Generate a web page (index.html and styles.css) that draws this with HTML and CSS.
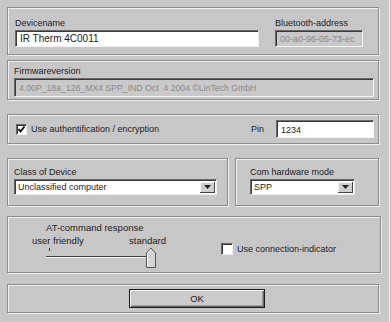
FILE: index.html
```html
<!DOCTYPE html>
<html lang="en">
  <head>
    <meta charset="UTF-8" />
    <title>Device settings</title>
    <link rel="stylesheet" href="styles.css">
  </head>
  <body>
    <div class="dialog">
      <div class="panel panel-name">
        <div class="field grow">
          <label>Devicename</label>
          <div class="edit">IR Therm 4C0011</div>
        </div>
        <div class="field bt">
          <label>Bluetooth-address</label>
          <div class="edit disabled">00-a0-96-05-73-ec</div>
        </div>
      </div>

      <div class="panel panel-fw">
        <div class="field grow">
          <label>Firmwareversion</label>
          <div class="edit disabled fw">4.00P_18a_128_MX4 SPP_IND Oct&nbsp; 4 2004 ©LinTech GmbH</div>
        </div>
      </div>

      <div class="panel panel-auth">
        <div class="check">
          <span class="box">
            <svg width="9" height="9" viewBox="0 0 9 9"><polyline points="1.5,4 3.5,6.5 7.5,1.5" fill="none" stroke="#111" stroke-width="2"/></svg>
          </span>
          <span>Use authentification / encryption</span>
        </div>
        <div class="pin">
          <span>Pin</span>
          <div class="edit pin-edit">1234</div>
        </div>
      </div>

      <div class="row">
        <div class="panel panel-class">
          <div class="field grow">
            <label>Class of Device</label>
            <div class="combo">
              <span class="combo-text">Unclassified computer</span>
              <span class="drop"><svg width="7" height="4" viewBox="0 0 7 4"><polygon points="0,0 7,0 3.5,4" fill="#222"/></svg></span>
            </div>
          </div>
        </div>
        <div class="panel panel-com">
          <div class="field grow">
            <label>Com hardware mode</label>
            <div class="combo">
              <span class="combo-text">SPP</span>
              <span class="drop"><svg width="7" height="4" viewBox="0 0 7 4"><polygon points="0,0 7,0 3.5,4" fill="#222"/></svg></span>
            </div>
          </div>
        </div>
      </div>

      <div class="panel panel-at">
        <div class="slider-group">
          <div class="at-title">AT-command response</div>
          <div class="slider-labels">
            <span>user friendly</span>
            <span>standard</span>
          </div>
          <div class="slider">
            <span class="tick"></span>
            <span class="track"></span>
            <svg class="thumb" width="10" height="21" viewBox="0 0 10 21">
              <polygon points="0.5,20.5 0.5,6 5,1 9.5,6 9.5,20.5" fill="#d4d4d4" stroke="#555"/>
              <polyline points="1.5,19.5 1.5,6.5 5,2.5" fill="none" stroke="#fff"/>
            </svg>
          </div>
        </div>
        <div class="check conn">
          <span class="box"></span>
          <span>Use connection-indicator</span>
        </div>
      </div>

      <div class="panel panel-ok">
        <button class="ok">OK</button>
      </div>
    </div>
  </body>
</html>
```

FILE: styles.css
```css
body {
  margin: 0;
  background: #c7c7c7;
  font-family: "Liberation Sans", Arial, sans-serif;
  font-size: 9px;
  color: #1c1c1c;
  width: 391px;
  height: 322px;
  overflow: hidden;
}

.dialog {
  display: flex;
  flex-direction: column;
  padding: 7px 10px 0 7px;
  border-right: 1px solid #e8e8e8;
  height: 322px;
  box-sizing: border-box;
  width: 390px;
}

.panel {
  border: 1px solid #8c8c8c;
  box-shadow: 1px 1px 0 #efefef, inset 1px 1px 0 #efefef;
  box-sizing: border-box;
  display: flex;
}

.field {
  display: flex;
  flex-direction: column;
}

.field label {
  line-height: 11px;
  margin-bottom: 1px;
}

.grow {
  flex: 1;
}

.edit {
  background: #fff;
  border-top: 1px solid #6a6a6a;
  border-left: 1px solid #6a6a6a;
  border-right: 1px solid #f2f2f2;
  border-bottom: 1px solid #f2f2f2;
  box-shadow: inset 1px 1px 0 #3a3a3a;
  height: 16px;
  line-height: 16px;
  padding-left: 4px;
  box-sizing: border-box;
  font-size: 10px;
}

.edit.disabled {
  background: #c9c9c9;
  color: #8a8a8a;
}

/* Devicename */
.panel-name {
  height: 48px;
  padding: 10px 15px 0 7px;
  gap: 16px;
}

.panel-name .edit {
  height: 17px;
}

.bt {
  width: 88px;
}

.bt .edit {
  font-size: 9px;
}

/* Firmware */
.panel-fw {
  margin-top: 5px;
  height: 40px;
  padding: 5px 4px 0 6px;
}

.panel-fw .edit {
  height: 19px;
  line-height: 19px;
}

.fw {
  font-size: 8.7px;
}

/* auth */
.panel-auth {
  margin-top: 14px;
  height: 30px;
  padding: 0 4px 0 8px;
  align-items: center;
  justify-content: space-between;
}

.check {
  display: flex;
  align-items: center;
  gap: 4px;
  font-size: 9px;
}

.box {
  width: 9px;
  height: 9px;
  background: #fff;
  border-top: 1px solid #6a6a6a;
  border-left: 1px solid #6a6a6a;
  border-right: 1px solid #efefef;
  border-bottom: 1px solid #efefef;
  box-shadow: inset 1px 1px 0 #333;
  display: flex;
}

.pin {
  display: flex;
  align-items: center;
  gap: 12px;
}

.pin-edit {
  width: 98px;
  height: 18px;
  line-height: 18px;
  font-size: 9px;
}

/* class / com */
.row {
  display: flex;
  margin-top: 14px;
  gap: 7px;
}

.panel-class {
  width: 221px;
  height: 48px;
  padding: 8px 10px 0 6px;
}

.panel-com {
  flex: 1;
  height: 48px;
  padding: 8px 23px 0 14px;
}

.combo {
  display: flex;
  align-items: center;
  background: #fff;
  border-top: 1px solid #6a6a6a;
  border-left: 1px solid #6a6a6a;
  border-right: 1px solid #efefef;
  border-bottom: 1px solid #efefef;
  box-shadow: inset 1px 1px 0 #3a3a3a;
  height: 14px;
  padding: 0 1px 0 3px;
  font-size: 9px;
}

.combo-text {
  flex: 1;
}

.drop {
  width: 15px;
  height: 11px;
  background: #cfcfcf;
  border-right: 1px solid #444;
  border-bottom: 1px solid #444;
  box-shadow: inset 1px 1px 0 #f4f4f4;
  box-sizing: border-box;
  display: flex;
  align-items: center;
  justify-content: center;
}

/* AT-command */
.panel-at {
  margin-top: 10px;
  height: 57px;
  width: 374px;
  padding: 4px 0 0 24px;
}

.slider-group {
  width: 134px;
  display: flex;
  flex-direction: column;
}

.at-title {
  padding-left: 14px;
  font-size: 9.5px;
  line-height: 13px;
}

.slider-labels {
  display: flex;
  justify-content: space-between;
  font-size: 9.5px;
  line-height: 13px;
}

.slider {
  position: relative;
  height: 22px;
  margin-left: 14px;
  width: 110px;
}

.tick {
  position: absolute;
  left: 3px;
  top: 1px;
  width: 1px;
  height: 3px;
  background: #333;
}

.track {
  position: absolute;
  left: 0;
  right: 4px;
  top: 9px;
  height: 1px;
  background: #444;
  box-shadow: 0 1px 0 #f2f2f2;
}

.thumb {
  position: absolute;
  right: 0;
  top: 0;
}

.conn {
  margin-left: 55px;
  margin-top: 22px;
  align-self: flex-start;
}

.conn .box {
  width: 10px;
  height: 10px;
}

/* OK */
.panel-ok {
  margin-top: 11px;
  height: 29px;
  justify-content: center;
  align-items: center;
}

.ok {
  width: 136px;
  height: 19px;
  margin-left: 8px;
  background: #cbcbcb;
  border: 1px solid #1a1a1a;
  box-shadow: inset 1px 1px 0 #f4f4f4, inset -1px -1px 0 #6a6a6a, inset -2px -2px 0 #999;
  font-family: "Liberation Sans", Arial, sans-serif;
  font-size: 9.5px;
  color: #1c1c1c;
  padding: 0;
}
```
